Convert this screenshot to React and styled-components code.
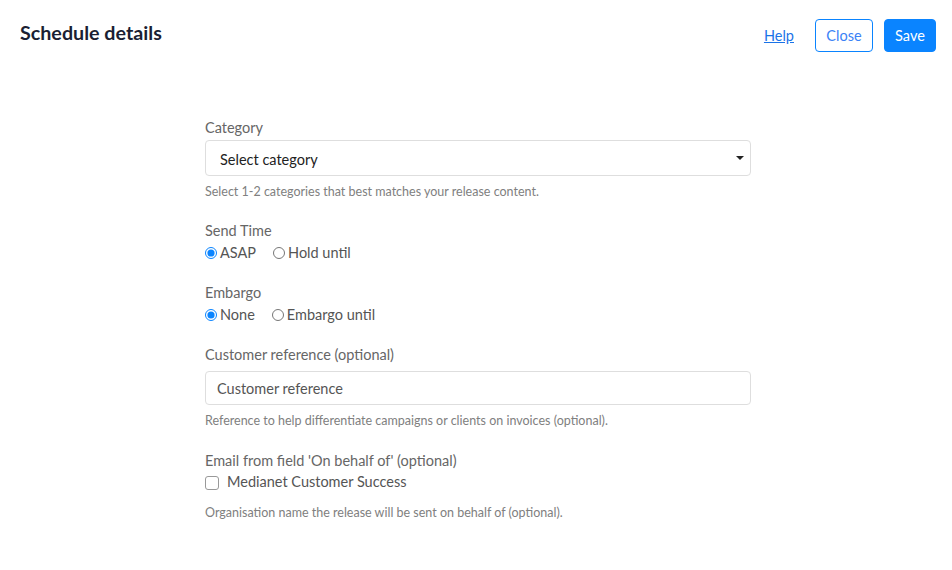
import React, { useState } from 'react';
import styled, { createGlobalStyle } from 'styled-components';

const GlobalStyle = createGlobalStyle`
  html, body {
    margin: 0;
    padding: 0;
    background: #fff;
    font-family: Lato, "Open Sans", "Liberation Sans", sans-serif;
  }
  * { box-sizing: border-box; }
`;

const Page = styled.div`
  width: 952px;
  height: 570px;
  background: #fff;
`;

const Header = styled.header`
  display: flex;
  justify-content: space-between;
  align-items: flex-start;
  padding: 19px 16px 0 20px;
`;

const Title = styled.h1`
  margin: 0;
  padding-top: 1px;
  font-size: 19.7px;
  line-height: 26px;
  font-weight: 700;
  color: #1b1f33;
`;

const Actions = styled.div`
  display: flex;
  align-items: center;
  gap: 11px;
`;

const HelpLink = styled.a`
  font-size: 14.5px;
  color: #1a73e8;
  text-decoration: underline;
  margin-right: 10px;
  cursor: pointer;
`;

const Button = styled.button`
  height: 33px;
  width: ${p => (p.primary ? 52 : 58)}px;
  padding: 0;
  font-family: inherit;
  font-size: 14.5px;
  border-radius: 4px;
  border: 1px solid #0a84ff;
  background: ${p => (p.primary ? '#0a84ff' : '#fff')};
  color: ${p => (p.primary ? '#fff' : '#3b82f6')};
  cursor: pointer;
`;

const Form = styled.form`
  width: 546px;
  margin: 66px 0 0 205px;
  display: flex;
  flex-direction: column;
`;

const Field = styled.div`
  display: flex;
  flex-direction: column;
  margin-bottom: ${p => p.gap || 21}px;
`;

const Label = styled.label`
  font-size: 14.5px;
  line-height: 20px;
  color: #666;
  margin-bottom: ${p => p.gap || 0}px;
`;

const SelectBox = styled.div`
  position: relative;
  height: 36px;
  border: 1px solid #dedede;
  border-radius: 4px;
  display: flex;
  align-items: center;
  padding: 2px 14px 0;
  font-size: 14.5px;
  color: #222;
`;

const Caret = styled.span`
  position: absolute;
  right: 6px;
  top: 15px;
  width: 0;
  height: 0;
  border-left: 4px solid transparent;
  border-right: 4px solid transparent;
  border-top: 4px solid #222;
`;

const TextInput = styled.input`
  height: 34px;
  border: 1px solid #dedede;
  border-radius: 4px;
  padding: 0 11px;
  font-family: inherit;
  font-size: 14.5px;
  color: #333;
  outline: none;
  &::placeholder { color: #555; }
`;

const Hint = styled.div`
  font-size: 12.5px;
  line-height: 17px;
  color: #808080;
  margin-top: ${p => p.gap || 7}px;
`;

const RadioRow = styled.div`
  display: flex;
  align-items: center;
  gap: 17px;
  height: 21px;
  margin-top: 1px;
`;

const Option = styled.label`
  display: flex;
  align-items: center;
  gap: 2px;
  font-size: 14.5px;
  color: #555;
  cursor: pointer;
`;

const Radio = styled.input.attrs({ type: 'radio' })`
  margin: 0 1px 0 0;
  width: 12px;
  height: 12px;
  accent-color: #0a84ff;
`;

const CheckRow = styled.label`
  display: flex;
  align-items: center;
  gap: 8px;
  height: 21px;
  font-size: 14.5px;
  color: #555;
  cursor: pointer;
`;

const Box = styled.span`
  width: 14px;
  height: 14px;
  border: 1px solid #999;
  border-radius: 3px;
  margin-top: 3px;
`;

function RadioGroup({ name, options, value, onChange }) {
  return (
    <RadioRow>
      {options.map(o => (
        <Option key={o}>
          <Radio name={name} checked={value === o} onChange={() => onChange(o)} />
          {o}
        </Option>
      ))}
    </RadioRow>
  );
}

export default function App() {
  const [send, setSend] = useState('ASAP');
  const [embargo, setEmbargo] = useState('None');

  return (
    <Page>
      <GlobalStyle />
      <Header>
        <Title>Schedule details</Title>
        <Actions>
          <HelpLink>Help</HelpLink>
          <Button type="button">Close</Button>
          <Button type="button" primary>Save</Button>
        </Actions>
      </Header>
      <Form onSubmit={e => e.preventDefault()}>
        <Field>
          <Label gap={2}>Category</Label>
          <SelectBox>
            Select category
            <Caret />
          </SelectBox>
          <Hint>Select 1-2 categories that best matches your release content.</Hint>
        </Field>
        <Field gap={20}>
          <Label>Send Time</Label>
          <RadioGroup name="send" options={['ASAP', 'Hold until']} value={send} onChange={setSend} />
        </Field>
        <Field gap={20}>
          <Label>Embargo</Label>
          <RadioGroup name="embargo" options={['None', 'Embargo until']} value={embargo} onChange={setEmbargo} />
        </Field>
        <Field gap={22}>
          <Label gap={6}>Customer reference (optional)</Label>
          <TextInput placeholder="Customer reference" />
          <Hint>Reference to help differentiate campaigns or clients on invoices (optional).</Hint>
        </Field>
        <Field>
          <Label>Email from field 'On behalf of' (optional)</Label>
          <CheckRow>
            <Box />
            Medianet Customer Success
          </CheckRow>
          <Hint gap={12}>Organisation name the release will be sent on behalf of (optional).</Hint>
        </Field>
      </Form>
    </Page>
  );
}
